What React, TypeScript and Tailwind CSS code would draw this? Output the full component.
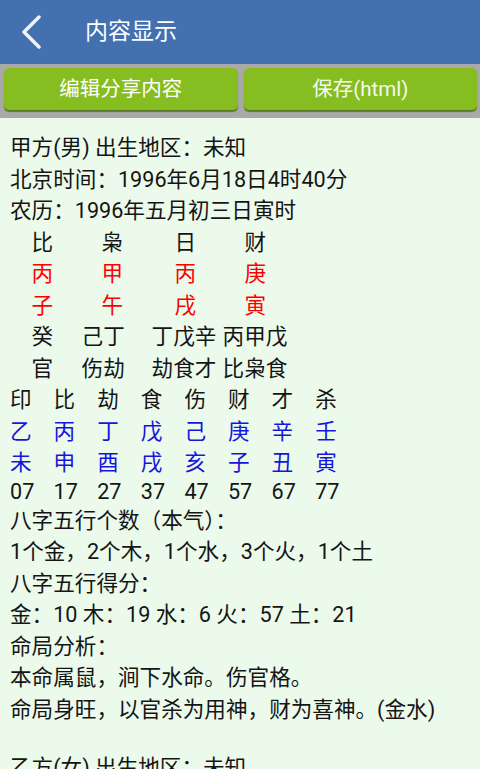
import React from 'react';

const FONT = { fontFamily: 'Roboto, "Noto Sans CJK SC", sans-serif' };

const pillars = [
  { label: '比', stem: '丙', branch: '子' },
  { label: '枭', stem: '甲', branch: '午' },
  { label: '日', stem: '丙', branch: '戌' },
  { label: '财', stem: '庚', branch: '寅' },
];

const hidden = [
  ['癸', '己丁', '丁戊辛', '丙甲戊'],
  ['官', '伤劫', '劫食才', '比枭食'],
];

const luck = {
  gods: ['印', '比', '劫', '食', '伤', '财', '才', '杀'],
  stems: ['乙', '丙', '丁', '戊', '己', '庚', '辛', '壬'],
  branches: ['未', '申', '酉', '戌', '亥', '子', '丑', '寅'],
  ages: ['07', '17', '27', '37', '47', '57', '67', '77'],
};

// column widths of the 4-pillar block
const pillarCols = ['w-[70px]', 'w-[73px]', 'w-[70px]', 'w-[70px]'];
const hiddenCols = ['w-[50px]', 'w-[70px]', 'w-[71px]', 'w-[80px]'];

const Row = ({ cells, widths, color }: { cells: string[]; widths: string[]; color?: string }) => (
  <div className={`flex pl-[21.6px] ${color ?? ''}`}>
    {cells.map((c, i) => (
      <span key={i} className={`${widths[i]} whitespace-nowrap`}>
        {c}
      </span>
    ))}
  </div>
);

const LuckRow = ({ cells, color, short }: { cells: string[]; color?: string; short?: boolean }) => (
  <div className={`flex ${color ?? ''} ${short ? 'h-[26px] leading-[26px]' : ''}`}>
    {cells.map((c, i) => (
      <span key={i} className="w-[43.6px]">
        {c}
      </span>
    ))}
  </div>
);

export default function App() {
  return (
    <div className="w-[480px] h-[769px] overflow-hidden bg-[#ebfaeb]" style={FONT}>
      {/* Title bar */}
      <div className="h-[64px] bg-[#4371b0] flex items-center">
        <svg width="24" height="34" viewBox="0 0 24 34" className="ml-[20px] mt-[-1px]">
          <path d="M19 2 L4 17 L19 32" fill="none" stroke="#f4f6fa" strokeWidth="3.4" strokeLinecap="round" strokeLinejoin="round" />
        </svg>
        <span className="ml-[41px] text-[23px] text-white">内容显示</span>
      </div>

      {/* Action buttons */}
      <div className="h-[54px] bg-[#a9a9a9] flex gap-[6px] pl-[4px] pr-[3px] pt-[4px]">
        <button className="flex-1 h-[42px] rounded-[5px] bg-[#86be22] shadow-[0_2px_1px_#5c7a2c] text-white text-[20.5px]">
          编辑分享内容
        </button>
        <button className="flex-1 h-[42px] rounded-[5px] bg-[#86be22] shadow-[0_2px_1px_#5c7a2c] text-[#f4f8ee] text-[20.5px]">
          保存(html)
        </button>
      </div>

      {/* Content */}
      <div className="pl-[10px] pt-[14px] text-[21.6px] leading-[31.5px] text-[#151515]">
        <div>甲方(男) 出生地区：未知</div>
        <div>北京时间：1996年6月18日4时40分</div>
        <div>农历：1996年五月初三日寅时</div>

        <Row cells={pillars.map((p) => p.label)} widths={pillarCols} />
        <Row cells={pillars.map((p) => p.stem)} widths={pillarCols} color="text-[#ff0000]" />
        <Row cells={pillars.map((p) => p.branch)} widths={pillarCols} color="text-[#ff0000]" />
        <Row cells={hidden[0]} widths={hiddenCols} />
        <Row cells={hidden[1]} widths={hiddenCols} />

        <LuckRow cells={luck.gods} />
        <LuckRow cells={luck.stems} color="text-[#1515dd]" />
        <LuckRow cells={luck.branches} color="text-[#1515dd]" />
        <LuckRow cells={luck.ages} short />

        <div>八字五行个数（本气）：</div>
        <div>1个金，2个木，1个水，3个火，1个土</div>
        <div>八字五行得分：</div>
        <div>金：10 木：19 水：6 火：57 土：21</div>
        <div>命局分析：</div>
        <div>本命属鼠，涧下水命。伤官格。</div>
        <div>命局身旺，以官杀为用神，财为喜神。(金水)</div>
        <div className="h-[27px]" />
        <div>乙方(女) 出生地区：未知</div>
      </div>
    </div>
  );
}
